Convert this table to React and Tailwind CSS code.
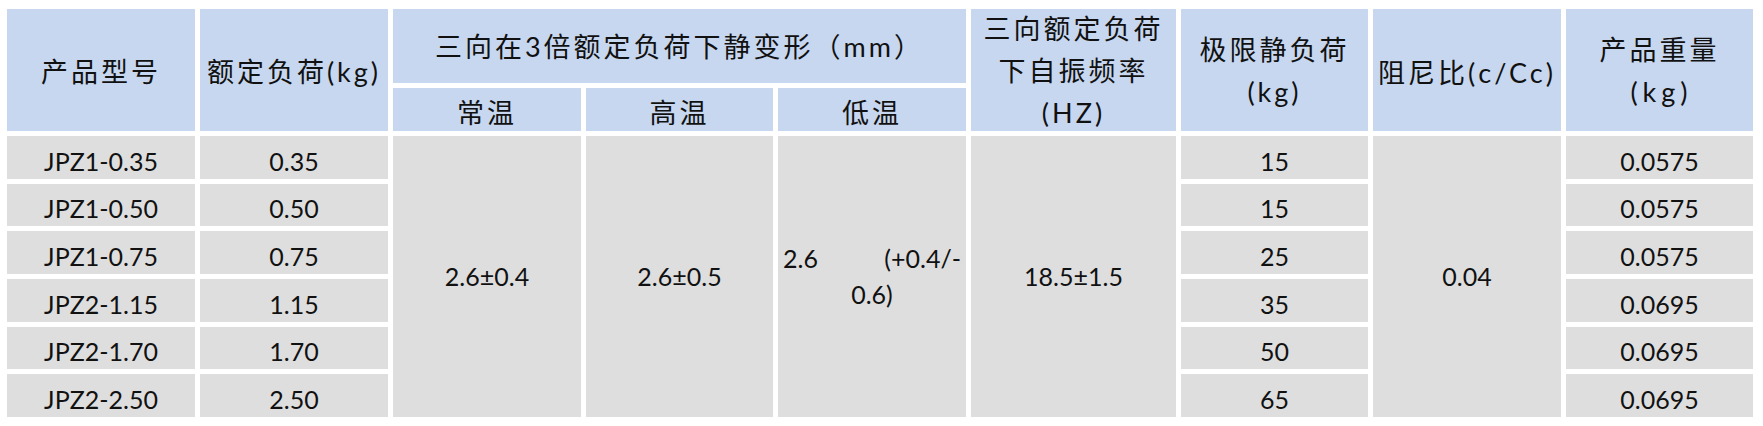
import React from "react";

const font = { fontFamily: "Lato, 'Noto Sans CJK SC', sans-serif" };

const models = ["JPZ1-0.35", "JPZ1-0.50", "JPZ1-0.75", "JPZ2-1.15", "JPZ2-1.70", "JPZ2-2.50"];
const loads = ["0.35", "0.50", "0.75", "1.15", "1.70", "2.50"];
const limits = ["15", "15", "25", "35", "50", "65"];
const weights = ["0.0575", "0.0575", "0.0575", "0.0695", "0.0695", "0.0695"];
const rowStarts = ["row-start-3", "row-start-4", "row-start-5", "row-start-6", "row-start-7", "row-start-8"];

const H = "bg-[#c7d7ef] flex items-center justify-center text-center text-[27px] tracking-[3px] text-[#111111]";
const B = "bg-[#dedede] flex items-center justify-center text-center text-[25px] text-[#111111]";

export default function App() {
  return (
    <div className="w-[1763px] h-[426px] bg-white pl-[7px] pt-[9px]" style={font}>
      <div className="grid grid-cols-[188px_188px_188px_187px_188px_205px_187px_188px_187px] grid-rows-[74px_43px_repeat(6,42.67px)] gap-[5px] w-max">
        {/* header */}
        <div className={`${H} col-start-1 row-start-1 row-span-2 pt-[4px]`}>产品型号</div>
        <div className={`${H} col-start-2 row-start-1 row-span-2 pt-[4px]`}>额定负荷(kg)</div>
        <div className={`${H} col-start-3 col-span-3 row-start-1 pt-[3px]`}>三向在3倍额定负荷下静变形（mm）</div>
        <div className={`${H} col-start-6 row-start-1 row-span-2 flex-col leading-[42px] pt-[2px]`}>
          <span>三向额定负荷</span>
          <span>下自振频率</span>
          <span>(HZ)</span>
        </div>
        <div className={`${H} col-start-7 row-start-1 row-span-2 flex-col leading-[42px] pt-[2px]`}>
          <span>极限静负荷</span>
          <span>(kg)</span>
        </div>
        <div className={`${H} col-start-8 row-start-1 row-span-2 pt-[6px]`}>阻尼比(c/Cc)</div>
        <div className={`${H} col-start-9 row-start-1 row-span-2 flex-col leading-[42px] pt-[2px]`}>
          <span>产品重量</span>
          <span className="tracking-[5px] pl-[4px]">(kg)</span>
        </div>
        <div className={`${H} col-start-3 row-start-2 pt-[7px]`}>常温</div>
        <div className={`${H} col-start-4 row-start-2 pt-[7px]`}>高温</div>
        <div className={`${H} col-start-5 row-start-2 pt-[7px]`}>低温</div>

        {/* body per-row */}
        {models.map((m, i) => (
          <React.Fragment key={m}>
            <div className={`${B} col-start-1 ${rowStarts[i]} pt-[8px]`}>{m}</div>
            <div className={`${B} col-start-2 ${rowStarts[i]} pt-[8px]`}>{loads[i]}</div>
            <div className={`${B} col-start-7 ${rowStarts[i]} pt-[8px]`}>{limits[i]}</div>
            <div className={`${B} col-start-9 ${rowStarts[i]} pt-[8px]`}>{weights[i]}</div>
          </React.Fragment>
        ))}

        {/* merged body cells */}
        <div className={`${B} col-start-3 row-start-3 row-span-6`}>2.6±0.4</div>
        <div className={`${B} col-start-4 row-start-3 row-span-6`}>2.6±0.5</div>
        <div className="bg-[#dedede] col-start-5 row-start-3 row-span-6 flex flex-col justify-center text-[25px] leading-[36px] text-[#111111] px-[5px]">
          <div className="flex justify-between">
            <span>2.6</span>
            <span>(+0.4/-</span>
          </div>
          <div className="text-center">0.6)</div>
        </div>
        <div className={`${B} col-start-6 row-start-3 row-span-6`}>18.5±1.5</div>
        <div className={`${B} col-start-8 row-start-3 row-span-6`}>0.04</div>
      </div>
    </div>
  );
}
